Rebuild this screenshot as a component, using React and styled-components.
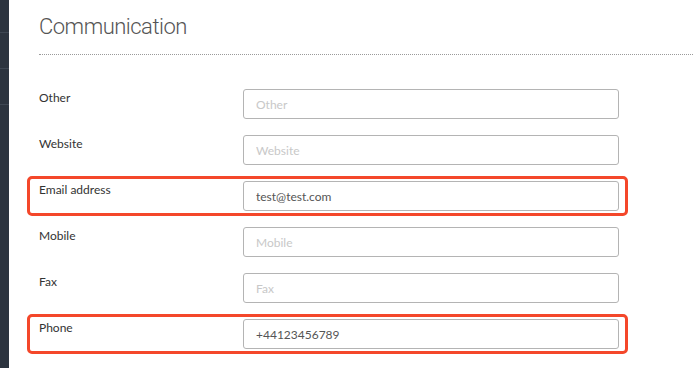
import React from 'react';
import styled, { createGlobalStyle } from 'styled-components';

const GlobalStyle = createGlobalStyle`
    html, body {
        margin: 0;
        padding: 0;
        background: #fff;
    }
    body {
        font-family: Lato, "Liberation Sans", sans-serif;
        overflow: hidden;
    }
`;

const fields = [
    { label: 'Other', placeholder: 'Other' },
    { label: 'Website', placeholder: 'Website' },
    { label: 'Email address', placeholder: 'Email address', value: 'test@test.com', highlight: true },
    { label: 'Mobile', placeholder: 'Mobile' },
    { label: 'Fax', placeholder: 'Fax' },
    { label: 'Phone', placeholder: 'Phone', value: '+44123456789', highlight: true },
];

const App = () => {
    return (
        <Page>
            <GlobalStyle />
            <Sidebar>
                <SideItem $first />
                <SideItem />
                <SideItem />
            </Sidebar>
            <Main>
                <SectionHeader>
                    <Title>Communication</Title>
                </SectionHeader>
                <Form>
                    {fields.map((f) => (
                        <Row key={f.label} $highlight={f.highlight}>
                            <Label>{f.label}</Label>
                            <Input type='text' placeholder={f.placeholder} defaultValue={f.value} />
                        </Row>
                    ))}
                </Form>
            </Main>
        </Page>
    );
};

export default App;

// styles

const Page = styled.div`
    display: flex;
    width: 693px;
    height: 368px;
    overflow: hidden;
`;

const Sidebar = styled.div`
    width: 9px;
    flex-shrink: 0;
    background: #2c343f;
    display: flex;
    flex-direction: column;
`;

const SideItem = styled.div`
    height: ${(p) => (p.$first ? '32px' : '35px')};
    border-bottom: 1px solid #3e4753;
`;

const Main = styled.div`
    flex: 1;
    padding-left: 30px;
`;

const SectionHeader = styled.div`
    height: 55px;
    border-bottom: 1px dotted #9a9a9a;
    box-sizing: border-box;
    padding-top: 13px;
`;

const Title = styled.h2`
    margin: 0;
    font-family: Roboto, "Open Sans", sans-serif;
    font-weight: 300;
    font-size: 22px;
    line-height: 28px;
    letter-spacing: -0.5px;
    color: #555;
`;

const Form = styled.div`
    display: flex;
    flex-direction: column;
    gap: 16px;
    padding-top: 34px;
    width: 580px;
`;

const Row = styled.div`
    position: relative;
    display: flex;
    align-items: flex-start;

    &::before {
        content: '';
        display: ${(p) => (p.$highlight ? 'block' : 'none')};
        position: absolute;
        top: -5px;
        bottom: -5px;
        left: -12px;
        right: -9px;
        border: 3px solid #f4472a;
        border-radius: 5px;
        pointer-events: none;
    }
`;

const Label = styled.label`
    width: 204px;
    flex-shrink: 0;
    font-size: 12px;
    line-height: 15px;
    color: #333;
    padding-top: 1px;
`;

const Input = styled.input`
    box-sizing: border-box;
    width: 377px;
    height: 30px;
    border: 1px solid #b4b4b4;
    border-radius: 3px;
    padding: 0 12px;
    font-family: Lato, "Liberation Sans", sans-serif;
    font-size: 12px;
    color: #555;
    background: #fff;
    outline: none;

    &::placeholder {
        color: #c8c8c8;
    }
`;
